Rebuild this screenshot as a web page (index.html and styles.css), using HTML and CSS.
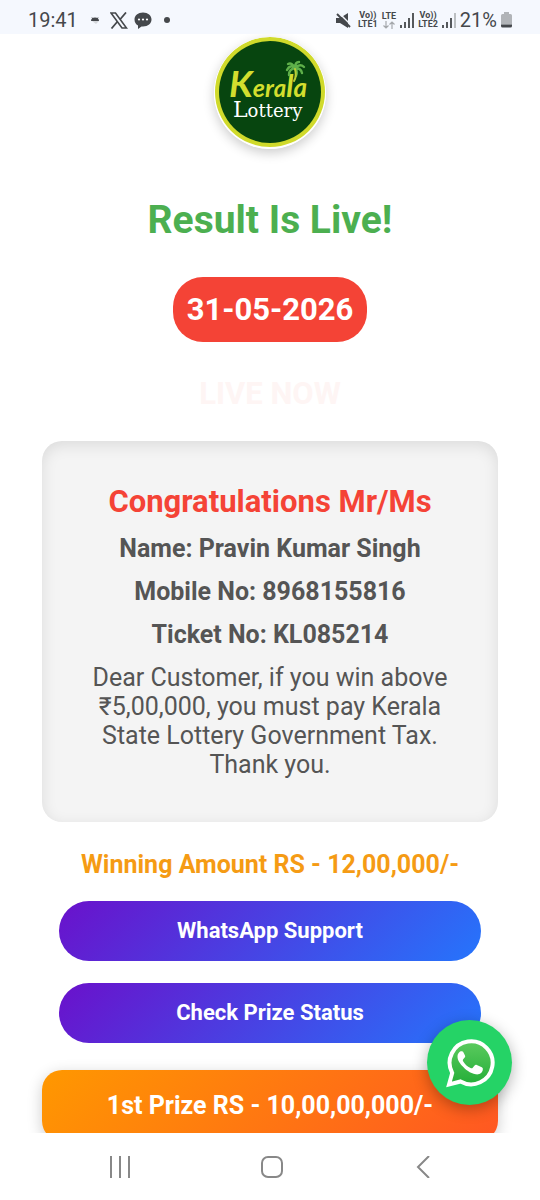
FILE: index.html
```html
<!DOCTYPE html>
<html lang="en">

<head>
    <meta charset="UTF-8">
    <meta name="viewport" content="width=device-width, initial-scale=1.0">
    <title>Result Is Live!</title>
    <link rel="stylesheet" href="styles.css">
</head>

<body>
    <header class="status-bar">
        <div class="status-left">
            <span class="clock">19:41</span>
            <svg class="icon-android" width="10" height="10" viewBox="0 0 10 10">
                <path d="M1 6a4 3.500 0 0 1 8 0z" fill="#45484c" />
                <path d="M2 2.500l1 1.500M8 2.500l-1 1.500" stroke="#45484c" />
                <path d="M2 6h7l-3 3z" fill="#d5d8dc" />
            </svg>
            <svg class="icon-x" width="18" height="17" viewBox="0 0 18 17">
                <path d="M1 1h4.500l11 15H12z" fill="none" stroke="#45484c" stroke-width="1.600" />
                <path d="M16 .5L10 7.500M7.500 9.500L1.500 16.500" stroke="#45484c" stroke-width="1.800" />
            </svg>
            <svg class="icon-chat" width="18" height="17" viewBox="0 0 18 17">
                <path d="M9 .5c5 0 8.500 3 8.500 7s-3.500 7-8.500 7l-1.500-.1L4 17v-3.500C1.800 12.300.5 10.200.5 7.500c0-4 3.500-7 8.500-7z" fill="#45484c" />
                <circle cx="5" cy="7.500" r="1.100" fill="#fff" />
                <circle cx="9" cy="7.500" r="1.100" fill="#fff" />
                <circle cx="13" cy="7.500" r="1.100" fill="#fff" />
            </svg>
            <span class="dot"></span>
        </div>
        <div class="status-right">
            <svg class="icon-mute" width="15" height="15" viewBox="0 0 15 15">
                <path d="M0 5h4l8-5v15L4 10H0z" fill="#45484c" />
                <path d="M2 -1l14 14" stroke="#f5f8fe" stroke-width="1.500" />
                <path d="M1 1l13 13" stroke="#45484c" stroke-width="2" />
            </svg>
            <span class="volte"><span>Vo))</span><span>LTE1</span></span>
            <span class="volte"><span>LTE</span>
                <svg width="12" height="8" viewBox="0 0 12 8">
                    <path d="M3 0v7M.5 4.500L3 7l2.500-2.500M9 8V1M6.500 3.500L9 1l2.500 2.500" fill="none" stroke="#a5a8ac" stroke-width="1.200" />
                </svg>
            </span>
            <svg width="14" height="15" viewBox="0 0 14 15">
                <path d="M1 12v3M5 9v6M9 5v10M13 0v15" stroke="#45484c" stroke-width="1.800" />
            </svg>
            <span class="volte"><span>Vo))</span><span>LTE2</span></span>
            <svg width="14" height="15" viewBox="0 0 14 15">
                <path d="M1 12v3M5 9v6M9 5v10" stroke="#45484c" stroke-width="1.800" />
                <path d="M13 0v15" stroke="#b5b8bc" stroke-width="1.800" />
            </svg>
            <span class="clock">21%</span>
            <svg width="11" height="16" viewBox="0 0 11 16">
                <path d="M3 0h5v2h1.500Q11 2 11 3.500v9H0v-9Q0 2 1.500 2H3z" fill="#b1b4b8" />
                <path d="M0 12.500h11v1.500q0 1.500-1.500 1.500h-8Q0 15.500 0 14z" fill="#45484c" />
            </svg>
        </div>
    </header>

    <main class="page">
        <svg class="logo" width="112" height="112" viewBox="0 0 112 112" role="img" aria-label="Kerala Lottery">
            <circle cx="56" cy="56" r="56" fill="#fff" />
            <circle cx="56" cy="55" r="55" fill="#d0da2b" />
            <circle cx="56" cy="55" r="51" fill="#07450f" />
            <text class="logo-kerala" x="15" y="60"><tspan font-size="37">K</tspan><tspan font-size="25">er</tspan><tspan font-size="24">a</tspan><tspan font-size="30">l</tspan><tspan font-size="26">a</tspan></text>
            <text class="logo-lottery" x="19" y="80"><tspan font-size="22">L</tspan><tspan font-size="18">ottery</tspan></text>
            <g fill="none" stroke="#5fb04a" stroke-width="2.400" stroke-linecap="round">
                <path d="M81 31q-5-4-8 2M81 31q-6 1-6 7M81 31q-3-6-7-4M81 31q0-6 4-6M81 31q5-5 9-1M81 31q6 0 7 5M81 31q3 4 1 8" />
                <path d="M81 32q2 7-1 12" stroke="#b9cd35" stroke-width="2" />
            </g>
        </svg>

        <h1 class="title">Result Is Live!</h1>
        <div class="date">31-05-2026</div>
        <div class="live">LIVE NOW</div>

        <section class="winner-card">
            <h2>Congratulations Mr/Ms</h2>
            <p class="detail">Name: Pravin Kumar Singh</p>
            <p class="detail">Mobile No: 8968155816</p>
            <p class="detail">Ticket No: KL085214</p>
            <p>Dear Customer, if you win above ₹5,00,000, you must pay Kerala State Lottery Government Tax. Thank you.</p>
        </section>

        <p class="amount">Winning Amount RS - 12,00,000/-</p>
        <button class="btn" type="button">WhatsApp Support</button>
        <button class="btn" type="button">Check Prize Status</button>
        <div class="prize">1st Prize RS - 10,00,00,000/-</div>
    </main>

    <footer class="nav-bar">
        <button type="button" aria-label="Recent apps">
            <svg width="22" height="22" viewBox="0 0 22 22">
                <path d="M2 0v22M11 0v22M20 0v22" />
            </svg>
        </button>
        <button type="button" aria-label="Home">
            <svg width="22" height="22" viewBox="0 0 22 22">
                <rect x="1" y="1" width="20" height="20" rx="6" />
            </svg>
        </button>
        <button type="button" aria-label="Back">
            <svg width="22" height="22" viewBox="0 0 22 22">
                <path d="M16 0L5 11l11 11" />
            </svg>
        </button>
        <button class="whatsapp" type="button" aria-label="WhatsApp">
            <svg width="50" height="50" viewBox="0 0 50 50">
                <defs>
                    <linearGradient id="bubble" x1="0" y1="0" x2="0" y2="1">
                        <stop offset="0" stop-color="#5ccb5f" />
                        <stop offset="1" stop-color="#24ae38" />
                    </linearGradient>
                </defs>
                <path d="M4 46.500l3.200-11.500A21.500 21.500 0 1 1 15.500 43.500z" fill="url(#bubble)" stroke="#fff" stroke-width="4" />
                <path d="M18.500 14.500c-.6-1.200-1.200-1.200-2-1.200-1.700 0-4 2-4 5.400 0 3.700 2.800 7 4.800 9.300 3.200 3.600 7.700 7.200 13.500 8.300 3.600.6 6.700-1.600 7-4.600.2-1.500 0-2-1-2.500l-5-2.300c-1-.4-1.500-.3-2.200.6l-1.900 2.300c-.6.700-1.200.7-2.200.2-3.300-1.500-5.700-3.800-7.400-6.800-.5-.9-.3-1.400.3-2.100l1.500-1.900c.4-.6.4-1.100.1-1.800z" fill="#fff" />
            </svg>
        </button>
    </footer>
</body>

</html>
```
FILE: styles.css
```css
* {
    box-sizing: border-box;
}

body {
    margin: 0;
    height: 100vh;
    display: flex;
    flex-direction: column;
    font-family: Roboto, "Liberation Sans", sans-serif;
    background-color: #fff;
    color: #555;
    text-align: center;
}

h1, h2, p {
    margin: 0;
}

button {
    border: none;
    font-family: inherit;
    cursor: pointer;
}

.status-bar {
    display: flex;
    justify-content: space-between;
    align-items: center;
    flex-shrink: 0;
    padding: 6px 28px 0;
    height: 34px;
    background-color: #f5f8fe;
    color: #45484c;
}

.status-left,
.status-right {
    display: flex;
    align-items: center;
}

.status-left {
    gap: 6px;
}

.status-right {
    gap: 4px;
}

.clock {
    font-size: 20px;
}

.icon-android {
    margin: 0 4px 0 6px;
}

.icon-mute {
    margin-right: 3px;
}

.dot {
    width: 6px;
    height: 6px;
    margin-left: 6px;
    border-radius: 50%;
    background-color: #45484c;
}

.volte {
    display: flex;
    flex-direction: column;
    align-items: center;
    font-size: 9px;
    font-weight: 700;
    line-height: 9px;
}

.page {
    flex: 1;
    min-height: 0;
    overflow: hidden;
    display: flex;
    flex-direction: column;
    align-items: center;
    padding: 3px 42px 0;
}

.page > * {
    flex-shrink: 0;
}

.logo {
    border-radius: 50%;
    box-shadow: 0 4px 12px rgba(0, 0, 0, 0.2);
}

.logo-kerala {
    font-family: Lato, sans-serif;
    font-style: italic;
    font-weight: 700;
    fill: #d3de2e;
}

.logo-lottery {
    font-family: "DejaVu Serif", serif;
    fill: #fff;
}

.title {
    margin-top: 48px;
    font-size: 39px;
    line-height: 46px;
    color: #4caf50;
}

.date {
    margin-top: 34px;
    padding: 14px;
    border-radius: 30px;
    background-color: #f44336;
    color: #fff;
    font-size: 31px;
    font-weight: 700;
    line-height: 37px;
}

.live {
    margin-top: 34px;
    font-size: 31px;
    font-weight: 700;
    line-height: 36px;
    color: #fef5f4;
}

.winner-card {
    width: 100%;
    margin-top: 29px;
    padding: 43px 42px;
    border-radius: 20px;
    background-color: #f4f4f4;
    box-shadow: inset 0 4px 15px rgba(0, 0, 0, 0.1);
    font-size: 25px;
    line-height: 29px;
}

.winner-card h2 {
    margin-bottom: 14px;
    font-size: 31px;
    line-height: 36px;
    color: #f44336;
}

.detail {
    margin-bottom: 14px;
    font-weight: 700;
}

.amount {
    margin: 28px 0 22px;
    font-size: 25px;
    font-weight: 700;
    line-height: 29px;
    color: #f59b14;
}

.btn {
    width: 422px;
    max-width: 100%;
    margin-bottom: 22px;
    padding: 16px;
    border-radius: 30px;
    background: linear-gradient(135deg, #6a11cb, #2575fc);
    color: #fff;
    font-size: 22px;
    font-weight: 700;
    line-height: 28px;
}

.prize {
    width: 100%;
    margin-top: 5px;
    padding: 21px;
    border-radius: 20px;
    background: linear-gradient(135deg, #ff9800, #ff5722);
    box-shadow: 0 4px 15px rgba(0, 0, 0, 0.2);
    color: #fff;
    font-size: 25px;
    font-weight: 700;
    line-height: 29px;
}

.nav-bar {
    position: relative;
    display: grid;
    grid-template-columns: repeat(3, 1fr);
    flex-shrink: 0;
    height: 67px;
    padding: 0 40px 0 44px;
    background-color: #fff;
}

.nav-bar button {
    display: flex;
    align-items: center;
    justify-content: center;
    background-color: transparent;
}

.nav-bar svg {
    fill: none;
    stroke: #888;
    stroke-width: 2;
}

/* floating chat button above the page */
.nav-bar .whatsapp {
    position: absolute;
    right: 28px;
    bottom: 95px;
    width: 85px;
    height: 85px;
    border-radius: 50%;
    background-color: #25d366;
    box-shadow: 0 4px 15px rgba(0, 0, 0, 0.3);
}

.whatsapp svg {
    flex-shrink: 0;
    stroke: none;
}
```
